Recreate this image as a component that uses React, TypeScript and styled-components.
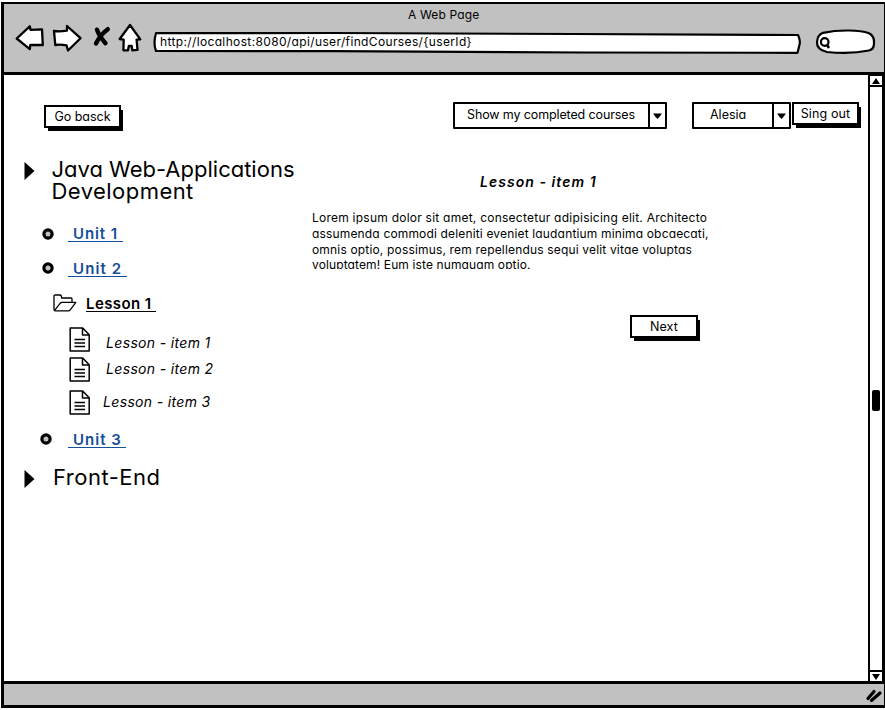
import React from 'react';
import styled, { createGlobalStyle } from 'styled-components';

const Global = createGlobalStyle`
  * { box-sizing: border-box; }
  body { margin: 0; background: #fff; }
  svg { display: block; flex: none; overflow: visible; }
`;

const Page = styled.div`
  width: 885px;
  height: 710px;
  padding: 2px 0 2px 1px;
  overflow: hidden;
  color: #000;
  font-family: Inter, 'Liberation Sans', sans-serif;
  font-feature-settings: 'cv11' 1;
  font-size: 12.5px;
`;

const Frame = styled.div`
  display: flex;
  flex-direction: column;
  height: 706px;
  border: 3px solid #000;
  border-width: 2px 1px 3px 3px;
`;

const Chrome = styled.header`
  flex: none;
  height: 71px;
  background: #c1c1c1;
  border-bottom: 3px solid #000;
`;

const Title = styled.div`
  height: 20px;
  padding-left: 404px;
  line-height: 21px;
  font-size: 12px;
  letter-spacing: 0.15px;
`;

const Toolbar = styled.div`
  display: flex;
  align-items: flex-start;
  padding-left: 11px;
`;

const Address = styled.div`
  position: relative;
  width: 649px;
  height: 22px;
  margin: 8px 13px 0 11px;
  padding-left: 7px;
  font-size: 12px;
  line-height: 19px;
  letter-spacing: 0.36px;
  white-space: nowrap;
`;

const Ink = styled.svg`
  position: absolute;
  inset: 0;
  z-index: 0;
`;

const Over = styled.span`
  position: relative;
`;

const Body = styled.div`
  display: flex;
  flex: 1;
  min-height: 0;
`;

const Content = styled.main`
  flex: 1;
  min-width: 0;
  padding: 27px 0 0 20px;
`;

const Bar = styled.div`
  display: flex;
  align-items: flex-start;
  height: 54px;
  padding-left: 20px;
`;

const Button = styled.button<{ $w: number; $ls?: number }>`
  width: ${(p) => p.$w}px;
  height: 23px;
  padding: 1px 0 0;
  background: #fff;
  border: 2px solid #000;
  box-shadow: 3px 4px 0 -1px #000;
  color: #000;
  font: inherit;
  font-feature-settings: inherit;
  line-height: 18px;
  letter-spacing: ${(p) => p.$ls ?? 0}px;
  white-space: nowrap;
`;

const BackSlot = styled.div`
  width: 409px;
  padding-top: 3px;
`;

const Select = styled.div<{ $w: number; $gap: number; $ls?: number }>`
  display: flex;
  width: ${(p) => p.$w}px;
  height: 27px;
  margin-right: ${(p) => p.$gap}px;
  border: 2px solid #000;
  border-radius: 1px;
  letter-spacing: ${(p) => p.$ls ?? 0}px;
`;

const SelectLabel = styled.div<{ $pad: number }>`
  flex: 1;
  padding-left: ${(p) => p.$pad}px;
  line-height: 21px;
  white-space: nowrap;
`;

const SelectArrow = styled.div`
  display: flex;
  align-items: center;
  justify-content: center;
  width: 17px;
  border-left: 2px solid #000;
`;

const Columns = styled.div`
  display: flex;
`;

const Tree = styled.nav`
  width: 288px;
`;

const Row = styled.div<{ $h: number; $pad?: number }>`
  display: flex;
  align-items: flex-start;
  height: ${(p) => p.$h}px;
  padding-left: ${(p) => p.$pad ?? 0}px;
`;

const Icon = styled.div<{ $w: number; $top?: number }>`
  flex: none;
  width: ${(p) => p.$w}px;
  padding-top: ${(p) => p.$top ?? 0}px;
`;

const Heading = styled.h2<{ $top?: number }>`
  margin: 0;
  padding-top: ${(p) => p.$top ?? 0}px;
  font-size: 22px;
  font-weight: 400;
  line-height: 22px;
  white-space: nowrap;
`;

const HeadingLine = styled.span<{ $ls: number }>`
  display: block;
  letter-spacing: ${(p) => p.$ls}px;
`;

const Link = styled.a<{ $w: number; $plain?: boolean; $ls?: number }>`
  width: ${(p) => p.$w}px;
  height: 18px;
  padding-left: ${(p) => (p.$plain ? 0 : 5)}px;
  border-bottom: 1px solid currentColor;
  color: ${(p) => (p.$plain ? '#000' : '#134f96')};
  font-size: 15px;
  font-weight: 600;
  line-height: 19px;
  letter-spacing: ${(p) => p.$ls ?? 0.9}px;
  white-space: nowrap;
`;

const Item = styled.span<{ $top: number; $ls?: number }>`
  padding-top: ${(p) => p.$top}px;
  font-size: 14px;
  font-style: italic;
  line-height: 20px;
  letter-spacing: ${(p) => p.$ls ?? 0.34}px;
  white-space: nowrap;
`;

const Lesson = styled.article`
  padding-top: 16px;
`;

const LessonTitle = styled.h3`
  margin: 0 0 17px 168px;
  font-size: 14px;
  font-style: italic;
  font-weight: 600;
  line-height: 20px;
  letter-spacing: 1.05px;
`;

const Paragraph = styled.div`
  height: 60px;
  overflow: hidden;
  font-size: 12px;
`;

const Line = styled.div<{ $ls: number; $h?: number }>`
  height: ${(p) => p.$h ?? 16}px;
  line-height: 17px;
  letter-spacing: ${(p) => p.$ls}px;
  white-space: nowrap;
`;

const NextSlot = styled.div`
  padding: 46px 0 0 318px;
`;

const Scrollbar = styled.div`
  display: flex;
  flex-direction: column;
  align-items: center;
  width: 16px;
  border: 2px solid #000;
  border-width: 1px 2px 0 2px;
`;

const ScrollButton = styled.div<{ $end?: boolean }>`
  display: flex;
  align-items: center;
  justify-content: center;
  width: 100%;
  height: 11px;
  border: 0 solid #000;
  border-width: ${(p) => (p.$end ? '2px 0 0' : '0 0 2px')};
`;

const Track = styled.div`
  flex: 1;
  padding-top: 303px;
`;

const Thumb = styled.div`
  width: 8px;
  height: 21px;
  border-radius: 2px;
  background: #000;
`;

const Footer = styled.footer`
  flex: none;
  display: flex;
  justify-content: flex-end;
  height: 24px;
  padding: 5px 2px 0 0;
  border-top: 3px solid #000;
  background: #c1c1c1;
`;

const Triangle = () => (
  <svg width="12" height="20" viewBox="0 0 12 20"><path d="M.5 1 10.5 10 .5 19Z" /></svg>
);
const Bullet = () => (
  <svg width="12" height="12" viewBox="0 0 12 12">
    <circle cx="6" cy="6" r="4.1" fill="#c1c1c1" stroke="#000" strokeWidth="3.2" />
  </svg>
);
const Down = () => (
  <svg width="9" height="6" viewBox="0 0 9 6"><path d="M.1.5H8.9Q7 3.6 4.6 5.9 2.2 4 .1.5Z" /></svg>
);
const Doc = () => (
  <svg width="21" height="25" viewBox="0 0 21 25" fill="none" stroke="#000" strokeWidth="1.5" strokeLinejoin="round">
    <path d="M1.2 1H13.7L20.2 7.8V24H1.2ZM13.5 1V8H20.2M5.5 12.5H16M5.5 16H16M5.5 19.5H16" />
  </svg>
);
const Folder = () => (
  <svg width="24" height="18" viewBox="0 0 24 18" fill="none" stroke="#000" strokeWidth="1.3" strokeLinejoin="round">
    <path d="M1 15V2.2Q1 1 2.3 1H7Q8 1 8.3 2L8.7 4H18Q19 4 19 5V8.3M1.2 16.8 7.3 9.2Q8 8.4 9 8.4H22.8L17.2 15.8Q16.5 16.8 15.5 16.8H2Q1 16.8 1 15" />
  </svg>
);

export default function App() {
  return (
    <>
      <Global />
      <Page>
        <Frame>
          <Chrome>
            <Title>A Web Page</Title>
            <Toolbar>
              <svg width="127" height="30" viewBox="15 24 127 30" fill="#fff" stroke="#000" strokeWidth="2.3" strokeLinejoin="round">
                <path d="M16.7 38.5 29.8 26.3 30.5 29.8 42 29.4 42.8 45H30.3L29.8 49.2Z" />
                <path d="M54 31Q60 31.8 67 30.6V26L80.5 38.2 68 50.5 66.5 45.3Q60 44.3 55.3 45Z" />
                <path d="M119.7 39 130 25 140.3 39.4 136.6 39.7 137.5 49.8 132.3 50.3 131.7 46H128.8L128 50.3H123.4L123.7 39.7Z" />
                <path d="M97 29.7Q99 36 105.5 43.2M107.8 29.2Q100 35 96 43.5" fill="none" strokeWidth="4.4" strokeLinecap="round" />
              </svg>
              <Address>
                <Ink width="649" height="22" viewBox="0 0 649 22" fill="#fff" stroke="#000" strokeWidth="2.2" strokeLinejoin="round">
                  <path d="M3 1.2 180 1 420 2 645 3Q648 9 646.2 14L644.5 20.8 430 20.5 180 19.2 3 19Q0 11 3 1.2Z" />
                </Ink>
                <Over>{'http://localhost:8080/api/user/findCourses/{userId}'}</Over>
              </Address>
              <svg width="61" height="30" viewBox="815 24 61 30" fill="#fff" stroke="#000" strokeWidth="2.2" strokeLinejoin="round">
                <path d="M823 32.8Q835 30.3 849 30.5 862 30.5 869 33.2 874.5 36 874 43 874.3 49.3 869 50.5 850 54.5 827 52 816.5 49.5 817 42 817.5 35 823 32.8Z" />
                <circle cx="824.7" cy="42" r="3.8" />
                <path d="M827 45 829 48" strokeWidth="2.5" />
              </svg>
            </Toolbar>
          </Chrome>
          <Body>
            <Content>
              <Bar>
                <BackSlot><Button $w={77}>Go basck</Button></BackSlot>
                <Select $w={214} $gap={25} $ls={-0.12}>
                  <SelectLabel $pad={12}>Show my completed courses</SelectLabel>
                  <SelectArrow><Down /></SelectArrow>
                </Select>
                <Select $w={99} $gap={1}>
                  <SelectLabel $pad={16}>Alesia</SelectLabel>
                  <SelectArrow><Down /></SelectArrow>
                </Select>
                <Button $w={67} $ls={0.12}>Sing out</Button>
              </Bar>
              <Columns>
                <Tree>
                  <Row $h={68}>
                    <Icon $w={27.5} $top={5}><Triangle /></Icon>
                    <Heading $top={2}>
                      <HeadingLine $ls={0}>Java Web-Applications</HeadingLine>
                      <HeadingLine $ls={0.45}>Development</HeadingLine>
                    </Heading>
                  </Row>
                  <Row $h={35} $pad={18}>
                    <Icon $w={26} $top={4}><Bullet /></Icon>
                    <Link $w={55}>Unit 1</Link>
                  </Row>
                  <Row $h={35} $pad={18}>
                    <Icon $w={26} $top={3}><Bullet /></Icon>
                    <Link $w={59} $ls={1.1}>Unit 2</Link>
                  </Row>
                  <Row $h={33} $pad={29}>
                    <Icon $w={33}><Folder /></Icon>
                    <Link $w={70} $plain $ls={0.4}>Lesson 1</Link>
                  </Row>
                  <Row $h={30} $pad={45}>
                    <Icon $w={37}><Doc /></Icon>
                    <Item $top={6}>Lesson - item 1</Item>
                  </Row>
                  <Row $h={33} $pad={45}>
                    <Icon $w={37}><Doc /></Icon>
                    <Item $top={2}>Lesson - item 2</Item>
                  </Row>
                  <Row $h={40} $pad={45}>
                    <Icon $w={34}><Doc /></Icon>
                    <Item $top={2}>Lesson - item 3</Item>
                  </Row>
                  <Row $h={36} $pad={16}>
                    <Icon $w={28} $top={3}><Bullet /></Icon>
                    <Link $w={58} $ls={1}>Unit 3</Link>
                  </Row>
                  <Row $h={30}>
                    <Icon $w={29} $top={3}><Triangle /></Icon>
                    <Heading><HeadingLine $ls={0.5}>Front-End</HeadingLine></Heading>
                  </Row>
                </Tree>
                <Lesson>
                  <LessonTitle>Lesson - item 1</LessonTitle>
                  <Paragraph>
                    <Line $ls={0.24}>Lorem ipsum dolor sit amet, consectetur adipisicing elit. Architecto</Line>
                    <Line $ls={0.16}>assumenda commodi deleniti eveniet laudantium minima obcaecati,</Line>
                    <Line $ls={0.17} $h={15}>omnis optio, possimus, rem repellendus sequi velit vitae voluptas</Line>
                    <Line $ls={0.12}>voluptatem! Eum iste numquam optio.</Line>
                  </Paragraph>
                  <NextSlot><Button $w={68} $ls={0.1}>Next</Button></NextSlot>
                </Lesson>
              </Columns>
            </Content>
            <Scrollbar>
              <ScrollButton><svg width="8" height="6" viewBox="0 0 8 6"><path d="M4 0 8 6H0Z" /></svg></ScrollButton>
              <Track><Thumb /></Track>
              <ScrollButton $end><svg width="8" height="6" viewBox="0 0 8 6"><path d="M0 0H8L4 6Z" /></svg></ScrollButton>
            </Scrollbar>
          </Body>
          <Footer>
            <svg width="16" height="14" viewBox="0 0 16 14" stroke="#000" strokeWidth="3.2" strokeLinecap="round"><path d="M2 9.5 8 2.5M5.5 11.5 14 4" /></svg>
          </Footer>
        </Frame>
      </Page>
    </>
  );
}
